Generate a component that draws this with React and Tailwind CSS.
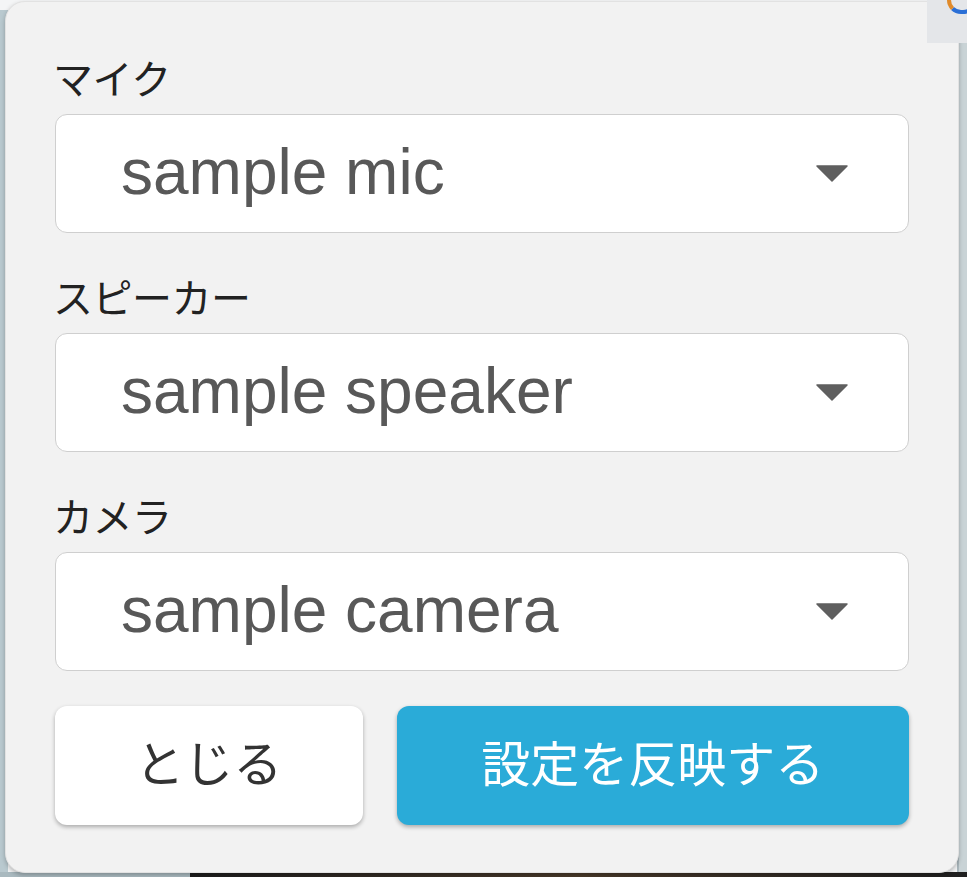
import React from "react";

const jp = { fontFamily: '"Noto Sans CJK JP", "Noto Sans", sans-serif' };
const en = { fontFamily: '"Liberation Sans", Arial, sans-serif' };

function Caret() {
  return (
    <svg width="32" height="17" viewBox="0 0 32 17" className="shrink-0">
      <path d="M1 1 L31 1 L16 16 Z" fill="#5f5f5f" stroke="#5f5f5f" strokeWidth="1.5" strokeLinejoin="round" />
    </svg>
  );
}

function Field({ label, value, first }) {
  return (
    <div className={first ? "" : "mt-[37px]"}>
      <div className="text-[40px] leading-[52px] text-[#222] tracking-[-0.5px] -ml-[2px]" style={jp}>
        {label}
      </div>
      <div className="mt-[11px] h-[119px] bg-white border-[1.5px] border-[#cfcfcf] rounded-[12px] flex items-center pl-[65px] pr-[60px]">
        <span className="flex-1 text-[64px] leading-none text-[#585858] -mt-[4px]" style={en}>
          {value}
        </span>
        <Caret />
      </div>
    </div>
  );
}

export default function App() {
  return (
    <div className="relative w-[967px] h-[877px] overflow-hidden bg-[#f4f5f6]">
      {/* backdrop strips */}
      <div className="absolute left-0 top-[10px] w-[8px] h-[870px] bg-[#b9c9cf]" />
      <div className="absolute right-0 top-[43px] w-[10px] h-[834px] bg-[#c9d3d6] border-l-[2px] border-[#aab7bc]" />
      <div className="absolute left-[190px] right-0 bottom-0 h-[5px] bg-gradient-to-r from-[#1d1d1d] via-[#4a3a2a] to-[#1f1f1f]" />
      <div className="absolute left-0 w-[190px] bottom-0 h-[5px] bg-[#a9b9bf]" />

      {/* dialog panel */}
      <div className="absolute left-[5px] top-[1px] w-[954px] h-[872px] bg-[#f2f2f2] rounded-[20px] border border-[#e2e2e2] shadow-[0_2px_4px_rgba(0,0,0,0.25)] pt-[49px] px-[49px] pb-[48px] flex flex-col">
        <Field label="マイク" value="sample mic" first />
        <Field label="スピーカー" value="sample speaker" />
        <Field label="カメラ" value="sample camera" />
        <div className="mt-[35px] flex gap-[34px]">
          <button
            className="flex-[3] h-[119px] bg-white rounded-[12px] shadow-[0_2px_4px_rgba(0,0,0,0.3)] text-[49px] text-[#333] flex items-center justify-center pb-[10px]"
            style={jp}
          >
            とじる
          </button>
          <button
            className="flex-[5] h-[119px] bg-[#2aabd8] rounded-[12px] shadow-[0_2px_4px_rgba(0,0,0,0.3)] text-[49px] text-white flex items-center justify-center pb-[10px]"
            style={jp}
          >
            設定を反映する
          </button>
        </div>
      </div>

      {/* top-right overlay box */}
      <div className="absolute right-0 top-0 w-[40px] h-[43px] bg-[#e4e6e9] overflow-hidden">
        <div className="absolute -top-[14px] left-[20px] w-[30px] h-[28px] rounded-full border-[4px] border-[#1a1a1a] border-l-[#e08a2a] border-b-[#2a6fd6]" />
      </div>
    </div>
  );
}
